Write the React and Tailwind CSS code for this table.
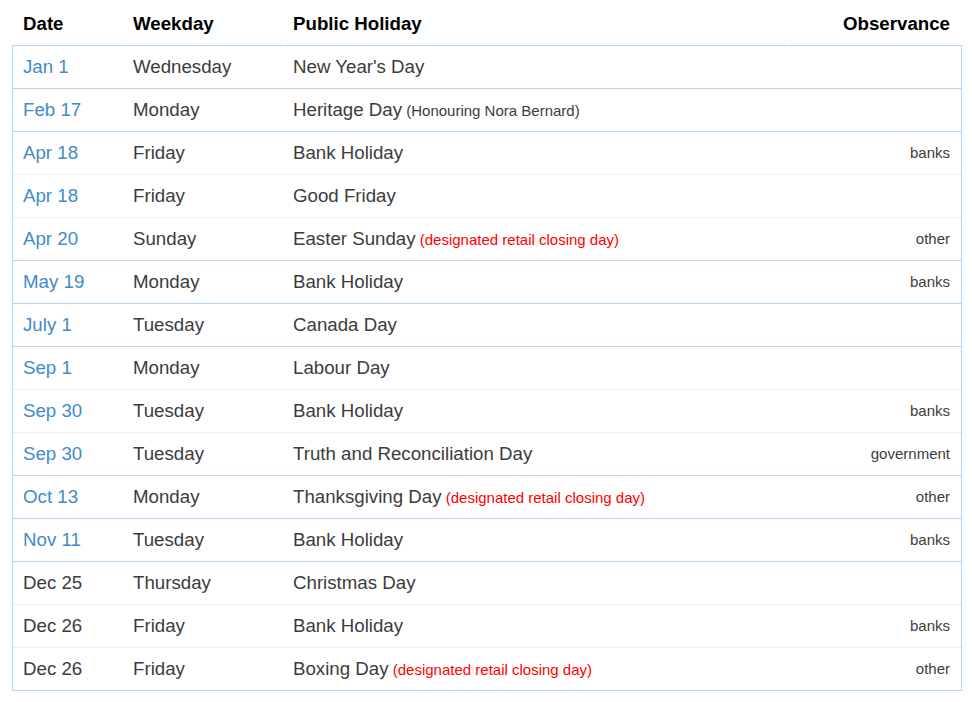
import React from "react";

const rows = [
  { d: "Jan 1", w: "Wednesday", h: "New Year's Day", link: true },
  { d: "Feb 17", w: "Monday", h: "Heritage Day", note: "(Honouring Nora Bernard)", link: true, solid: true },
  { d: "Apr 18", w: "Friday", h: "Bank Holiday", o: "banks", link: true, solid: true },
  { d: "Apr 18", w: "Friday", h: "Good Friday", link: true },
  { d: "Apr 20", w: "Sunday", h: "Easter Sunday", red: true, o: "other", link: true },
  { d: "May 19", w: "Monday", h: "Bank Holiday", o: "banks", link: true, solid: true },
  { d: "July 1", w: "Tuesday", h: "Canada Day", link: true, solid: true },
  { d: "Sep 1", w: "Monday", h: "Labour Day", link: true, solid: true },
  { d: "Sep 30", w: "Tuesday", h: "Bank Holiday", o: "banks", link: true },
  { d: "Sep 30", w: "Tuesday", h: "Truth and Reconciliation Day", o: "government", link: true },
  { d: "Oct 13", w: "Monday", h: "Thanksgiving Day", red: true, o: "other", link: true, solid: true },
  { d: "Nov 11", w: "Tuesday", h: "Bank Holiday", o: "banks", link: true, solid: true },
  { d: "Dec 25", w: "Thursday", h: "Christmas Day", solid: true },
  { d: "Dec 26", w: "Friday", h: "Bank Holiday", o: "banks" },
  { d: "Dec 26", w: "Friday", h: "Boxing Day", red: true, o: "other" },
];

export default function App() {
  return (
    <div
      className="bg-white w-[972px] h-[702px] text-[#3c3c3c]"
      style={{ fontFamily: '"Liberation Sans", Arial, sans-serif' }}
    >
      <div className="ml-[12px] w-[950px]">
        <div className="flex h-[46px] pt-[3px] text-[18.7px] font-bold text-black gap-px">
          <div className="w-[110px] pl-[11px] border-b border-[#b3d4f5] flex items-center">Date</div>
          <div className="w-[160px] pl-[10px] border-b border-[#b3d4f5] flex items-center">Weekday</div>
          <div className="w-[503px] pl-[9px] border-b border-[#b3d4f5] flex items-center">Public Holiday</div>
          <div className="flex-1 pr-[12px] border-b border-[#b3d4f5] flex items-center justify-end">Observance</div>
        </div>
        <div className="border-x border-b border-[#b3d4f5] text-[18.7px]">
          {rows.map((r, i) => (
            <div
              key={i}
              className={
                "flex items-center " +
                (i === 0
                  ? "h-[42px]"
                  : r.solid
                  ? "h-[43px] border-t border-solid border-[#b3d4f5]"
                  : "h-[43px] border-t border-dotted border-[#dddddd]")
              }
            >
              <div className={"w-[110px] pl-[10px] " + (r.link ? "text-[#428bca]" : "")}>{r.d}</div>
              <div className="w-[160px] pl-[10px]">{r.w}</div>
              <div className="w-[504px] pl-[10px] whitespace-nowrap">
                {r.h}
                {r.note && <span className="text-[15px]"> {r.note}</span>}
                {r.red && <span className="text-[15px] text-[#ff0000]"> (designated retail closing day)</span>}
              </div>
              <div className="flex-1 pr-[11px] text-right text-[15px]">{r.o || ""}</div>
            </div>
          ))}
        </div>
      </div>
    </div>
  );
}
